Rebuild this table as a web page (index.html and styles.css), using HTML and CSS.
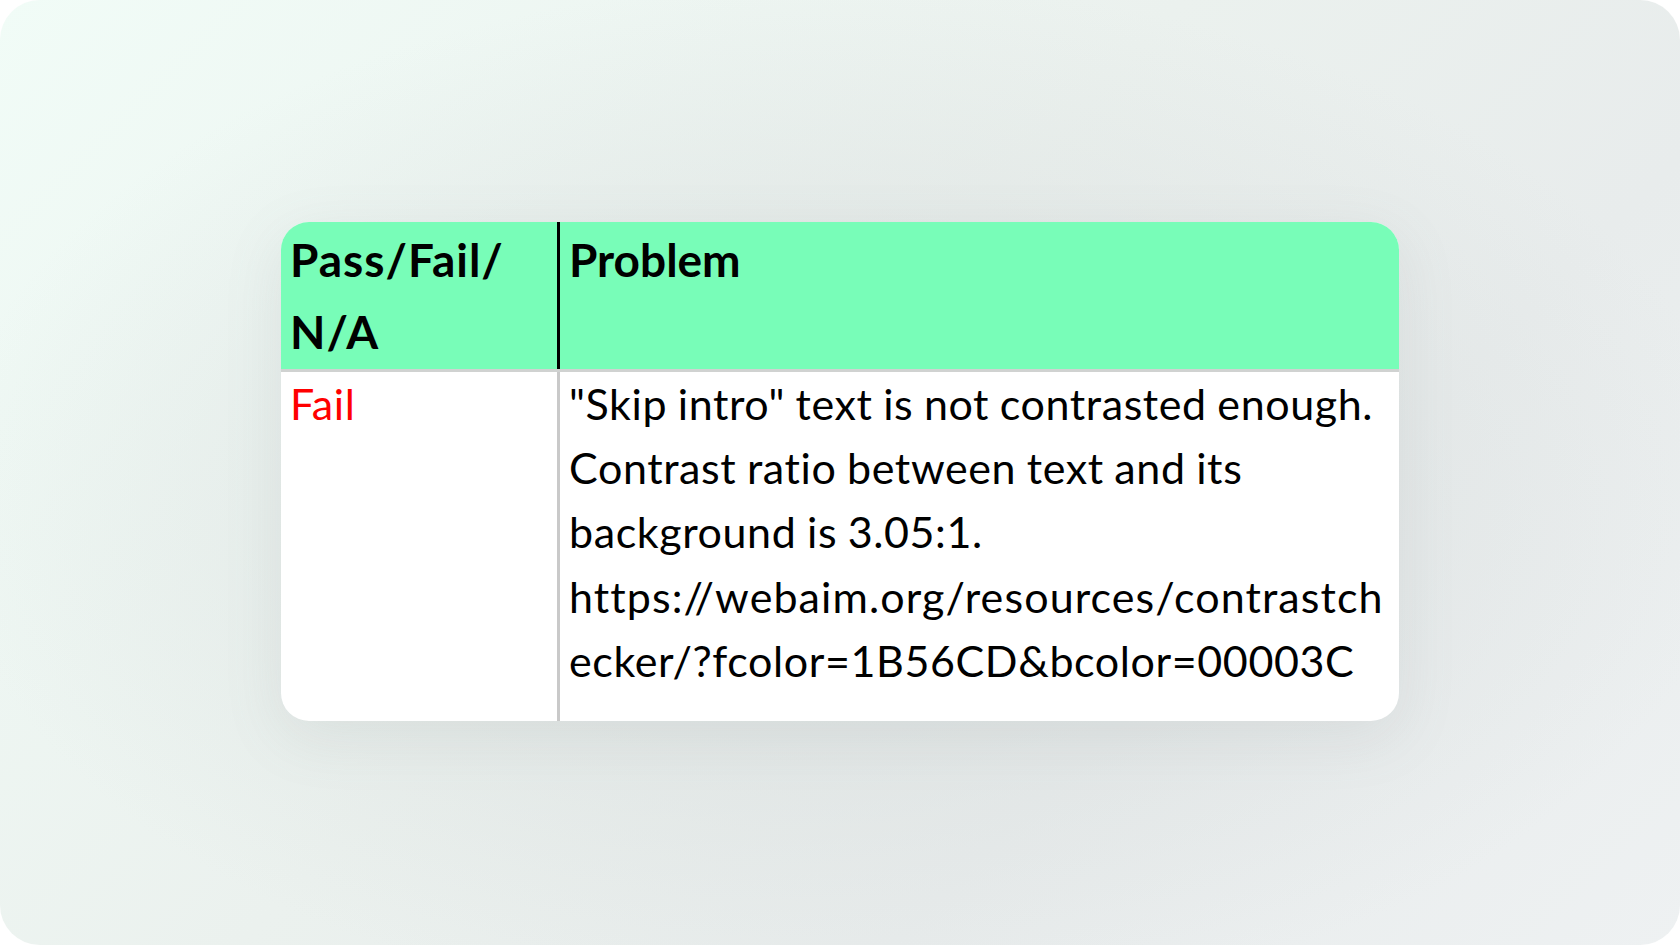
FILE: index.html
```html
<!DOCTYPE html>
<html lang="en">
<head>
<meta charset="utf-8">
<title>Contrast audit</title>
<link rel="stylesheet" href="styles.css">
</head>
<body>
<div class="frame">
  <div class="card">
    <div class="row head">
      <div class="cell c1">Pass/Fail/<br>N/A</div>
      <div class="cell c2">Problem</div>
    </div>
    <div class="row body">
      <div class="cell c1 fail">Fail</div>
      <div class="cell c2">"Skip intro" text is not contrasted enough.<br>Contrast ratio between text and its<br>background is 3.05:1.<br><span class="url">https://webaim.org/resources/contrastch</span><br>ecker/?fcolor=1B56CD&amp;bcolor=00003C</div>
    </div>
  </div>
</div>
</body>
</html>
```
FILE: styles.css
```css
* { box-sizing: border-box; }
html, body { margin: 0; padding: 0; background: #ffffff; }
body { width: 1680px; height: 945px; overflow: hidden; }
.frame {
  width: 1680px;
  height: 945px;
  border-radius: 40px;
  background:
    radial-gradient(ellipse 900px 520px at 840px 500px, rgba(214,219,219,0.75), rgba(214,219,219,0) 100%),
    linear-gradient(135deg, #f1fcf7 0%, #ebf1ee 45%, #e8ecec 70%, #eef1f2 100%);
  display: flex;
  align-items: center;
  justify-content: center;
  padding-bottom: 2px;
}
.card {
  width: 1118px;
  height: 499px;
  border-radius: 28px;
  overflow: hidden;
  background: #ffffff;
  box-shadow: 0 16px 60px rgba(120,130,130,0.12);
  display: flex;
  flex-direction: column;
  font-family: "Lato", "Open Sans", sans-serif;
  color: #000;
}
.row { display: flex; }
.head {
  height: 150px;
  background: #78fdb8;
  border-bottom: 3px solid #d0d2d1;
  font-weight: 700;
  font-size: 46px;
  line-height: 72px;
}
.head .c1 { letter-spacing: 1px; }
.body {
  flex: 1;
  font-size: 43px;
  line-height: 64.2px;
  letter-spacing: 0.6px;
  word-spacing: -1px;
}
.url { letter-spacing: 1.1px; }
.cell { white-space: nowrap; }
.c1 { width: 279px; padding-left: 9px; }
.c2 { flex: 1; padding-left: 9px; }
.head .c1 { border-right: 3px solid #000; }
.body .c1 { border-right: 3px solid #c9c9c9; }
.head .cell { padding-top: 2px; }
.body .cell { padding-top: 0; }
.fail { color: #ff0000; }
```
